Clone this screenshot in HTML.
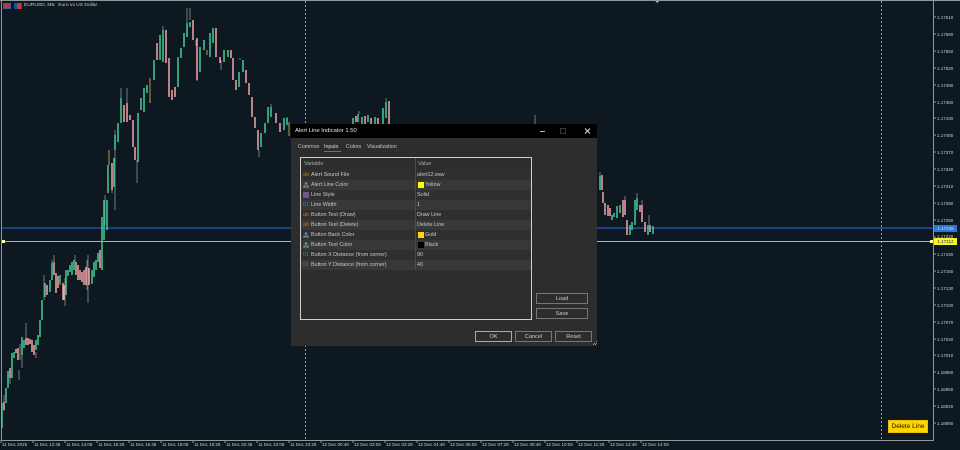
<!DOCTYPE html>
<html><head><meta charset="utf-8"><style>
html,body{margin:0;padding:0;background:#0e1821;width:960px;height:450px;overflow:hidden}
body{position:relative;font-family:"Liberation Sans",sans-serif}
.a{position:absolute;white-space:nowrap}
.t{font-size:4.5px;color:#c8d0d4;top:440px;height:9px;line-height:10px}
.p{font-size:4.5px;color:#c8d0d4;left:937px;line-height:7px;height:7px}
#d{left:291px;top:124px;width:306px;height:222px;background:#2d2d2d;overflow:hidden}
#d .a{font-size:5.3px;color:#c8c8c8;line-height:12px;height:12px}
.r{position:absolute;left:301px;width:230px;height:10px}
.b{position:absolute;border:1px solid #777;box-sizing:border-box;color:#ccc;font-size:5.6px;text-align:center;background:#2d2d2d}
.c{position:absolute;font-size:5.4px;line-height:12px;height:12px;color:#c8c8c8;white-space:nowrap}
.i{position:absolute;font-size:5.4px;line-height:12px;height:12px;left:303px;white-space:nowrap}
.s{position:absolute;left:418px;width:6px;height:6px}
.tri{position:absolute;left:303px;width:6px;height:6px}
#cd{filter:blur(.3px)}
</style></head><body>
<svg class="a" style="left:0;top:0" width="960" height="450" viewBox="0 0 960 450" fill="none" shape-rendering="crispEdges">
<path d="M1.5 0V440.5H933.5V0M0 .5H960" stroke="#8f979b" stroke-width="1"/>
<path d="M1 440v3M33 440v3M65 440v3M97 440v3M129 440v3M161 440v3M193 440v3M225 440v3M257 440v3M289 440v3M321 440v3M353 440v3M385 440v3M417 440v3M449 440v3M481 440v3M513 440v3M545 440v3M577 440v3M609 440v3M641 440v3" stroke="#8f979b"/>
<path d="M305.5 1V440M881.5 1V440" stroke="#98a0a4" stroke-dasharray="2 2"/>
<path d="M2 227.5H933" stroke="#5e2a32"/><path d="M2 228.5H933" stroke="#1e4488"/>
<path d="M2 241.5H933" stroke="#c4c42a"/>
<rect x="2" y="240" width="3" height="3" fill="#ffffa0"/><rect x="930" y="240" width="3" height="3" fill="#ffffa0"/>
<path d="M655 1h4l-2 2z" fill="#aab0b4"/>
<path d="M934 17h2M934 34h2M934 51h2M934 68h2M934 85h2M934 102h2M934 118h2M934 135h2M934 152h2M934 169h2M934 186h2M934 203h2M934 220h2M934 237h2M934 254h2M934 271h2M934 288h2M934 305h2M934 322h2M934 339h2M934 355h2M934 372h2M934 389h2M934 406h2M934 423h2" stroke="#8f979b"/>
<g id="cd" shape-rendering="auto">
<path stroke="#9aa8a6" stroke-width=".7" d="M4 395V411M10 368V384M20 344V360M22 355V368M26 323V340M19 370V380M36 352V358M44 275V300M52 260V265M54 255V263M65 278V306M87 260V290M75 255V262M88 255V303M105 195V225M112 190V193M115 130V210M121 88V98M127 88V105M137 160V183M150 100V103M163 26V32M187 8V24M190 8V20M197 80V81M221 60V70M240 58V60M271 104V110M287 117V120M259 150V157M196 40V46M600 172V176M625 196V202M637 193V199M649 215V225M535 115V124M386 98V103M359 111V114M642 200V206"/>
<path stroke="#e8bc58" stroke-width=".8" d="M150 78V103M207 50V55M109 150V165M60 278V285M289 122V136"/>
<path stroke="#45cc95" stroke-width="1.5" d="M2 403V428M6 388V403M8 371V388M12 353V378M14 352V358M22 337V355M24 340V348M36 340V350M38 335V345M40 320V337M42 300V320M45 283V297M50 280V292M52 263V280M60 275V283M66 270V295M68 270V276M70 265V272M72 262V275M74 260V270M92 270V284M94 262V277M96 260V270M98 253V262M102 217V270M104 200V240M107 200V230M108 165V193M114 158V187M115 135V150M118 123V142M121 98V123M138 150V162M138 113V150M141 98V110M144 88V112M147 85V93M154 60V80M160 35V60M163 30V62M178 57V87M181 48V58M184 33V47M187 23V37M190 22V27M200 47V72M204 40V50M210 33V57M213 28V43M224 50V62M228 50V57M239 72V87M243 60V72M261 133V147M265 123V133M268 107V123M271 107V117M284 118V130M287 118V125M353 118V124M358 114V122M362 117V124M368 115V122M375 117V124M383 108V124M386 102V118M600 176V190M612 215V220M614 213V217M617 206V218M620 205V213M630 225V235M632 222V230M635 200V225M637 198V210M648 225V235M653 226V234"/>
<path stroke="#f2a6a8" stroke-width="1.5" d="M4 402V410M10 368V378M16 349V353M18 348V360M26 338V345M28 338V345M30 339V344M32 340V352M34 345V355M47 285V295M54 262V275M56 273V293M58 276V288M63 283V300M64 285V300M76 262V275M78 265V280M80 270V280M82 272V282M84 270V285M86 267V285M89 268V285M100 250V268M112 163V190M124 105V122M127 103V122M130 115V120M133 120V147M135 147V160M157 43V60M166 30V63M169 58V97M172 90V100M175 87V97M193 20V40M197 38V80M216 28V57M220 57V63M231 50V58M233 58V80M236 80V90M246 70V83M249 83V95M252 97V117M255 117V128M258 130V150M276 113V123M280 123V132M356 116V122M365 116V124M371 118V124M378 118V124M389 101V124M602 175V190M603 192V203M605 203V215M608 205V216M610 208V216M623 200V217M625 200V215M627 220V235M640 205V212M642 205V222M645 222V232M650 225V232"/>
</g>
</svg>

<div class="a" style="left:3px;top:3px;width:8px;height:6px;box-sizing:border-box;background:#b83a3a;border:1px solid #2c5fa8"></div>
<div class="a" style="left:14px;top:3px;width:8px;height:6px;box-sizing:border-box;background:#c33a3a;border-left:3px solid #1c4ea0;border-right:1px solid #1c4ea0"></div>
<div class="a" style="left:24px;top:2px;font-size:4.9px;line-height:8px;color:#c8ced2">EURUSD, M5:&nbsp; Euro vs US Dollar</div>

<div class="a t" style="left:2px">11 Dec 2025</div><div class="a t" style="left:34px">11 Dec 12:48</div><div class="a t" style="left:66px">11 Dec 14:08</div><div class="a t" style="left:98px">11 Dec 15:28</div><div class="a t" style="left:130px">11 Dec 16:48</div><div class="a t" style="left:162px">11 Dec 18:08</div><div class="a t" style="left:194px">11 Dec 19:28</div><div class="a t" style="left:226px">11 Dec 20:48</div><div class="a t" style="left:258px">11 Dec 22:08</div><div class="a t" style="left:290px">11 Dec 23:28</div><div class="a t" style="left:322px">12 Dec 00:48</div><div class="a t" style="left:354px">12 Dec 02:08</div><div class="a t" style="left:386px">12 Dec 03:28</div><div class="a t" style="left:418px">12 Dec 04:48</div><div class="a t" style="left:450px">12 Dec 06:08</div><div class="a t" style="left:482px">12 Dec 07:28</div><div class="a t" style="left:514px">12 Dec 08:48</div><div class="a t" style="left:546px">12 Dec 10:08</div><div class="a t" style="left:578px">12 Dec 11:28</div><div class="a t" style="left:610px">12 Dec 12:48</div><div class="a t" style="left:642px">12 Dec 14:08</div>

<div class="a p" style="top:14px">1.17610</div><div class="a p" style="top:31px">1.17580</div><div class="a p" style="top:48px">1.17550</div><div class="a p" style="top:65px">1.17520</div><div class="a p" style="top:82px">1.17490</div><div class="a p" style="top:99px">1.17460</div><div class="a p" style="top:115px">1.17430</div><div class="a p" style="top:132px">1.17400</div><div class="a p" style="top:149px">1.17370</div><div class="a p" style="top:166px">1.17340</div><div class="a p" style="top:183px">1.17310</div><div class="a p" style="top:200px">1.17280</div><div class="a p" style="top:217px">1.17250</div><div class="a p" style="top:233px">1.17220</div><div class="a p" style="top:251px">1.17190</div><div class="a p" style="top:268px">1.17160</div><div class="a p" style="top:285px">1.17130</div><div class="a p" style="top:302px">1.17100</div><div class="a p" style="top:319px">1.17070</div><div class="a p" style="top:336px">1.17040</div><div class="a p" style="top:352px">1.17010</div><div class="a p" style="top:369px">1.16980</div><div class="a p" style="top:386px">1.16950</div><div class="a p" style="top:403px">1.16920</div><div class="a p" style="top:420px">1.16890</div>
<div class="a p" style="left:934px;top:225px;width:23px;height:7px;background:#2a78d0;color:#cfe2f5;text-align:center">1.17236</div>
<div class="a p" style="left:934px;top:238px;width:23px;height:7px;background:#f4f430;color:#333;text-align:center">1.17212</div>

<div class="a" style="left:888px;top:420px;width:40px;height:13px;background:#ffd400;box-sizing:border-box;border:1px solid #e8c000;color:#111;font-size:6.5px;line-height:11px;text-align:center">Delete Line</div>

<div class="a" id="d">
<div class="a" style="left:0;top:0;width:306px;height:14px;background:#000"></div>
<div class="a" style="left:4px;top:1px;font-size:5.85px!important;color:#e8e8e8">Alert Line Indicator 1.50</div>
<svg class="a" style="left:0;top:0;height:14px" width="306" height="14" fill="none"><path d="M249 7.5h5" stroke="#bbb"/><rect x="269.5" y="4.5" width="5" height="5" stroke="#3a3a3a"/><path d="M294 4.5l5 5M299 4.5l-5 5" stroke="#ddd"/></svg>
<div class="a" style="left:7px;top:17px">Common</div>
<div class="a" style="left:33px;top:17px;color:#ddd">Inputs</div>
<div class="a" style="left:33px;top:27px;width:17px;height:1px;background:#2f7fd0"></div>
<div class="a" style="left:55px;top:17px">Colors</div>
<div class="a" style="left:76px;top:17px">Visualization</div>
</div>

<div class="a" style="left:300px;top:157px;width:232px;height:163px;box-sizing:border-box;border:1px solid #cfcfcf"></div>
<div class="r" style="top:170px;background:#2f2f2f"></div><div class="r" style="top:180px;background:#383838"></div><div class="r" style="top:190px;background:#2f2f2f"></div><div class="r" style="top:200px;background:#383838"></div><div class="r" style="top:210px;background:#2f2f2f"></div><div class="r" style="top:220px;background:#383838"></div><div class="r" style="top:230px;background:#2f2f2f"></div><div class="r" style="top:240px;background:#383838"></div><div class="r" style="top:250px;background:#2f2f2f"></div><div class="r" style="top:260px;background:#383838"></div>
<div class="a" style="left:415px;top:158px;width:1px;height:112px;background:#4a4a4a"></div>

<div class="c" style="left:304px;top:158px;color:#aaa">Variable</div><div class="c" style="left:418px;top:158px;color:#aaa">Value</div>

<div class="i" style="top:169px;color:#b07a20">ab</div><div class="c" style="left:311px;top:169px">Alert Sound File</div><div class="c" style="left:417px;top:169px">alert12.wav</div>
<svg class="tri" style="top:182px" viewBox="0 0 6 6"><circle cx="3" cy="1.5" r="1.3" fill="#5a9ab0"/><circle cx="1.5" cy="4.5" r="1.3" fill="#b06a80"/><circle cx="4.5" cy="4.5" r="1.3" fill="#5aa070"/></svg><div class="c" style="left:311px;top:179px">Alert Line Color</div><div class="s" style="top:182px;background:#ffff00"></div><div class="c" style="left:425px;top:179px">Yellow</div>
<svg class="tri" style="top:192px" viewBox="0 0 6 6"><path d="M0 1h6M0 5h6" stroke="#6a6ac8" stroke-width="1.4"/><path d="M0 3h6" stroke="#c05a70" stroke-width="1.4"/></svg><div class="c" style="left:311px;top:189px">Line Style</div><div class="c" style="left:417px;top:189px">Solid</div>
<div class="i" style="top:199px;color:#3f74c0">01</div><div class="c" style="left:311px;top:199px">Line Width</div><div class="c" style="left:417px;top:199px">1</div>
<div class="i" style="top:209px;color:#b07a20">ab</div><div class="c" style="left:311px;top:209px">Button Text (Draw)</div><div class="c" style="left:417px;top:209px">Draw Line</div>
<div class="i" style="top:219px;color:#b07a20">ab</div><div class="c" style="left:311px;top:219px">Button Text (Delete)</div><div class="c" style="left:417px;top:219px">Delete Line</div>
<svg class="tri" style="top:232px" viewBox="0 0 6 6"><circle cx="3" cy="1.5" r="1.3" fill="#5a9ab0"/><circle cx="1.5" cy="4.5" r="1.3" fill="#b06a80"/><circle cx="4.5" cy="4.5" r="1.3" fill="#5aa070"/></svg><div class="c" style="left:311px;top:229px">Button Back Color</div><div class="s" style="top:232px;background:#ffd400"></div><div class="c" style="left:425px;top:229px">Gold</div>
<svg class="tri" style="top:242px" viewBox="0 0 6 6"><circle cx="3" cy="1.5" r="1.3" fill="#5a9ab0"/><circle cx="1.5" cy="4.5" r="1.3" fill="#b06a80"/><circle cx="4.5" cy="4.5" r="1.3" fill="#5aa070"/></svg><div class="c" style="left:311px;top:239px">Button Text Color</div><div class="s" style="top:242px;background:#000"></div><div class="c" style="left:425px;top:239px">Black</div>
<div class="i" style="top:249px;color:#3f74c0">01</div><div class="c" style="left:311px;top:249px">Button X Distance (from corner)</div><div class="c" style="left:417px;top:249px">90</div>
<div class="i" style="top:259px;color:#3f74c0">01</div><div class="c" style="left:311px;top:259px">Button Y Distance (from corner)</div><div class="c" style="left:417px;top:259px">40</div>

<div class="b" style="left:536px;top:293px;width:52px;height:11px;line-height:10px">Load</div>
<div class="b" style="left:536px;top:308px;width:52px;height:11px;line-height:10px">Save</div>
<div class="b" style="left:475px;top:331px;width:37px;height:11px;line-height:10px;border-color:#aaa">OK</div>
<div class="b" style="left:515px;top:331px;width:37px;height:11px;line-height:10px">Cancel</div>
<div class="b" style="left:555px;top:331px;width:37px;height:11px;line-height:10px">Reset</div>
<svg class="a" style="left:593px;top:341px" width="4" height="4"><path d="M3 0h1v1h-1zM1 2h1v1h-1zM3 2h1v1h-1zM0 3h1v1h-1zM2 3h1v1h-1z" fill="#999"/></svg>
</body></html>
